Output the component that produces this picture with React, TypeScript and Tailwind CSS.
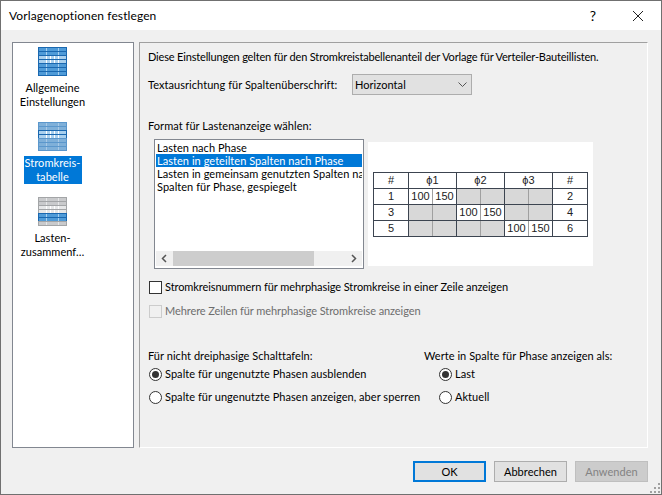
import React from 'react';

const font = "font-['Lato',sans-serif] text-[11px] leading-[16px] tracking-[0.05px]";

type Part = 'all' | 'middle' | 'bottom';

// Kleines Tabellen-Symbol fuer die Seitenleiste, part = hervorgehobener Bereich
const TableIcon = ({ part }: { part: Part }) => {
  const hi = { line: '#1a68b0', fill: '#4f9bd8', pale: '#a9d0ee' };
  const lo =
    part === 'middle'
      ? { line: '#5b97cc', fill: '#7fb0d9', pale: '#a8c9e6' }
      : part === 'bottom'
        ? { line: '#a3a5a7', fill: '#c9cacc', pale: '#e6e7e8' }
        : hi;
  const lit = (i: number) =>
    part === 'all' || (part === 'middle' && (i === 2 || i === 3)) || (part === 'bottom' && (i === 4 || i === 5));
  return (
    <svg width="29" height="29" viewBox="0 0 29 29" shapeRendering="crispEdges">
      <rect width="29" height="29" fill={lo.line} />
      {[0, 1, 2, 3, 4, 5, 6].map((i) => {
        const c = lit(i) ? hi : lo;
        const y = 1 + i * 4;
        const inner = i === 2 || i === 3;
        return (
          <g key={i}>
            <rect x="0" y={y - 1} width="29" height="1" fill={c.line} />
            <rect x="1" y={y} width="27" height="3" fill={inner ? c.pale : c.fill} />
            <rect x="0" y={y} width="1" height="3" fill={c.line} />
            <rect x="28" y={y} width="1" height="3" fill={c.line} />
            <rect x="8" y={y} width="1" height="3" fill={c.pale} />
            <rect x="20" y={y} width="1" height="3" fill={c.pale} />
            {inner && (
              <>
                <rect x="8" y={y} width="1" height="3" fill="#fff" />
                <rect x="12" y={y} width="1" height="3" fill="#fff" />
                <rect x="16" y={y} width="1" height="3" fill="#fff" />
                <rect x="20" y={y} width="1" height="3" fill="#fff" />
              </>
            )}
          </g>
        );
      })}
      <rect x="0" y="28" width="29" height="1" fill={lo.line} />
    </svg>
  );
};

const SideItem = ({ part, lines, selected }: { part: Part; lines: string[]; selected?: boolean }) => (
  <div className="flex h-[62px] flex-col items-center">
    <TableIcon part={part} />
    <div className={`mt-[5px] text-center leading-[14px] ${selected ? 'w-[58px] bg-[#0078d7] text-white' : 'text-black'}`}>
      {lines.map((l) => (
        <div key={l}>{l}</div>
      ))}
    </div>
  </div>
);

const Radio = ({ checked, label }: { checked?: boolean; label: string }) => (
  <div className="flex h-[16px] items-center gap-[3px]">
    <span className="flex h-[13px] w-[13px] shrink-0 items-center justify-center rounded-full border border-[#333] bg-white">
      {checked && <span className="h-[7px] w-[7px] rounded-full bg-[#333]" />}
    </span>
    <span className="whitespace-nowrap">{label}</span>
  </div>
);

const Check = ({ label, disabled }: { label: string; disabled?: boolean }) => (
  <div className={`flex h-[16px] items-center gap-[3px] pl-[1px] tracking-[-0.08px] ${disabled ? 'text-[#6d6d6d]' : ''}`}>
    <span className={`h-[13px] w-[13px] shrink-0 border ${disabled ? 'border-[#ccc] bg-[#f0f0f0]' : 'border-[#333] bg-white'}`} />
    <span className="whitespace-nowrap">{label}</span>
  </div>
);

const Btn = ({ label, isDefault, disabled }: { label: string; isDefault?: boolean; disabled?: boolean }) => (
  <div
    className={`flex h-[21px] w-[73px] items-center justify-center ${
      isDefault
        ? 'border-2 border-[#0078d7] bg-[#e1e1e1]'
        : disabled
          ? 'border border-[#bfbfbf] bg-[#cccccc] text-[#838383]'
          : 'border border-[#adadad] bg-[#e1e1e1]'
    }`}
  >
    {label}
  </div>
);

const td = 'border border-[#3c4450] text-center';
const sub = 'border-y border-[#3c4450]';

// Vorschau der Stromkreistabelle
const Preview = () => {
  const rows = [
    { a: '1', b: '2', on: 0 },
    { a: '3', b: '4', on: 1 },
    { a: '5', b: '6', on: 2 },
  ];
  return (
    <div className="flex h-[124px] w-[225px] items-center justify-center bg-white font-['Liberation_Sans',sans-serif] text-[11px] leading-[14px] tracking-normal text-[#222]">
      <table className="w-[215px] table-fixed border-collapse">
        <colgroup>
          <col className="w-[35px]" />
          <col className="w-[24px]" />
          <col className="w-[24px]" />
          <col className="w-[24px]" />
          <col className="w-[24px]" />
          <col className="w-[24px]" />
          <col className="w-[24px]" />
          <col className="w-[35px]" />
        </colgroup>
        <tbody>
          <tr className="h-[16px]">
            <td className={td}>#</td>
            <td className={td} colSpan={2}>ϕ1</td>
            <td className={td} colSpan={2}>ϕ2</td>
            <td className={td} colSpan={2}>ϕ3</td>
            <td className={td}>#</td>
          </tr>
          {rows.map((r) => (
            <tr key={r.a} className="h-[16px]">
              <td className={td}>{r.a}</td>
              {[0, 1, 2].map((p) => (
                <React.Fragment key={p}>
                  <td className={`${sub} border-l border-l-[#3c4450] border-r border-r-[#a0a0a0] text-center ${p === r.on ? '' : 'bg-[#d8d8d8]'}`}>
                    {p === r.on ? '100' : ''}
                  </td>
                  <td className={`${sub} border-r border-r-[#3c4450] text-center ${p === r.on ? '' : 'bg-[#d8d8d8]'}`}>
                    {p === r.on ? '150' : ''}
                  </td>
                </React.Fragment>
              ))}
              <td className={td}>{r.b}</td>
            </tr>
          ))}
        </tbody>
      </table>
    </div>
  );
};

export default function App() {
  return (
    <div className={`${font} flex h-[495px] w-[662px] flex-col border border-[#707070] bg-[#f0f0f0] text-black`}>
      {/* Titelleiste */}
      <div className="flex h-[29px] items-center bg-white pl-[8px]">
        <span className="flex-1 text-[12px] tracking-[0.1px]">Vorlagenoptionen festlegen</span>
        <span className="mr-[36px] text-[14px]">?</span>
        <svg width="12" height="12" viewBox="0 0 12 12" className="mr-[17px]" stroke="#222" strokeWidth="1">
          <path d="M1 1 L11 11 M11 1 L1 11" />
        </svg>
      </div>

      <div className="flex pl-[11px] pt-[12px]">
        {/* Seitenleiste */}
        <div className="h-[406px] w-[122px] border border-[#828790] bg-white pt-[4px]">
          <div className="flex w-[79px] flex-col gap-[13px]">
            <SideItem part="all" lines={['Allgemeine', 'Einstellungen']} />
            <SideItem part="middle" lines={['Stromkreis-', 'tabelle']} selected />
            <SideItem part="bottom" lines={['Lasten-', 'zusammenf…']} />
          </div>
        </div>

        {/* Inhalt */}
        <div className="ml-[5px] h-[406px] w-[509px] border border-t-[#a0a0a0] border-r-white border-b-white border-l-[#a0a0a0] pl-[8px] pt-[6px]">
          <div className="whitespace-nowrap tracking-[-0.17px]">Diese Einstellungen gelten für den Stromkreistabellenanteil der Vorlage für Verteiler-Bauteillisten.</div>

          <div className="mt-[9px] flex items-center">
            <span className="w-[204px] whitespace-nowrap">Textausrichtung für Spaltenüberschrift:</span>
            <div className="flex h-[21px] w-[120px] items-center justify-between border border-[#adadad] bg-[#e1e1e1] pl-[2px] pr-[4px]">
              <span>Horizontal</span>
              <svg width="9" height="5" viewBox="0 0 9 5" fill="none" stroke="#555">
                <path d="M0.5 0.5 L4.5 4.5 L8.5 0.5" />
              </svg>
            </div>
          </div>

          <div className="mt-[23px]">Format für Lastenanzeige wählen:</div>

          <div className="mt-[5px] flex items-start pl-[6px]">
            <div className="flex h-[130px] w-[210px] flex-col border border-[#828790] bg-white pb-[2px] pl-[1px] pr-[1px] pt-[1px]">
              <div className="flex-1 overflow-hidden whitespace-nowrap">
                <div className="h-[13px] pl-[1px] leading-[13px]">Lasten nach Phase</div>
                <div className="h-[13px] bg-[#0078d7] pl-[1px] leading-[13px] text-white">Lasten in geteilten Spalten nach Phase</div>
                <div className="h-[13px] pl-[1px] leading-[13px]">Lasten in gemeinsam genutzten Spalten nach Phase</div>
                <div className="h-[13px] pl-[1px] leading-[13px]">Spalten für Phase, gespiegelt</div>
              </div>
              <div className="flex h-[15px] items-center bg-[#f0f0f0]">
                <svg width="17" height="15" viewBox="0 0 17 15" fill="none" stroke="#555" strokeWidth="1.5">
                  <path d="M10 4 L6.5 7.5 L10 11" />
                </svg>
                <div className="h-[15px] w-[141px] bg-[#cdcdcd]" />
                <div className="flex-1" />
                <svg width="17" height="15" viewBox="0 0 17 15" fill="none" stroke="#555" strokeWidth="1.5">
                  <path d="M7 4 L10.5 7.5 L7 11" />
                </svg>
              </div>
            </div>
            <div className="ml-[4px] mt-[3px]">
              <Preview />
            </div>
          </div>

          <div className="mt-[10px]">
            <Check label="Stromkreisnummern für mehrphasige Stromkreise in einer Zeile anzeigen" />
          </div>
          <div className="mt-[8px]">
            <Check disabled label="Mehrere Zeilen für mehrphasige Stromkreise anzeigen" />
          </div>

          <div className="mt-[29px] flex">
            <div className="w-[276px]">
              <div className="mb-[2px]">Für nicht dreiphasige Schalttafeln:</div>
              <div className="pl-[1px]">
                <Radio checked label="Spalte für ungenutzte Phasen ausblenden" />
                <div className="mt-[7px]">
                  <Radio label="Spalte für ungenutzte Phasen anzeigen, aber sperren" />
                </div>
              </div>
            </div>
            <div>
              <div className="mb-[2px]">Werte in Spalte für Phase anzeigen als:</div>
              <div className="pl-[15px]">
                <Radio checked label="Last" />
                <div className="mt-[7px]">
                  <Radio label="Aktuell" />
                </div>
              </div>
            </div>
          </div>
        </div>
      </div>

      {/* Schaltflaechen */}
      <div className="relative flex flex-1 items-start justify-end gap-[8px] pr-[13px] pt-[13px]">
        <Btn label="OK" isDefault />
        <Btn label="Abbrechen" />
        <Btn label="Anwenden" disabled />
        <svg width="11" height="11" viewBox="0 0 11 11" className="absolute bottom-0 right-0" fill="#a0a0a0" shapeRendering="crispEdges">
          <rect x="8" y="0" width="2" height="2" />
          <rect x="4" y="4" width="2" height="2" />
          <rect x="8" y="4" width="2" height="2" />
          <rect x="0" y="8" width="2" height="2" />
          <rect x="4" y="8" width="2" height="2" />
          <rect x="8" y="8" width="2" height="2" />
        </svg>
      </div>
    </div>
  );
}
